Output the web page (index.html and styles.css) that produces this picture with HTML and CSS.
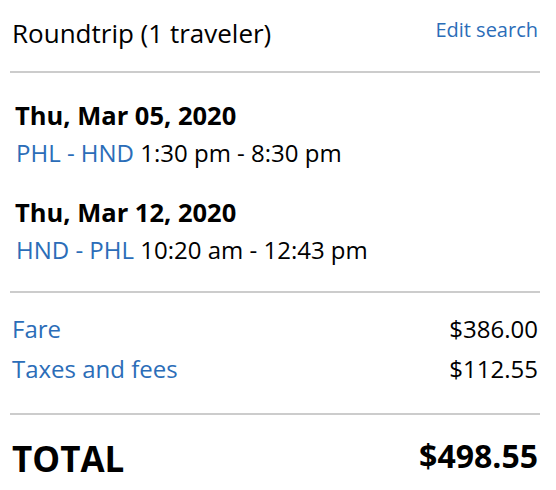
FILE: index.html
```html
<!DOCTYPE html>
<html lang="en">
<head>
<meta charset="utf-8">
<title>Trip summary</title>
<link rel="stylesheet" href="styles.css">
</head>
<body>
<div class="card">
  <div class="head">
    <span class="title">Roundtrip (1 traveler)</span>
    <a class="edit" href="#">Edit search</a>
  </div>
  <div class="rule rule-top"></div>
  <div class="legs">
    <div class="leg">
      <div class="date">Thu, Mar 05, 2020</div>
      <div class="route"><span class="codes">PHL - HND</span> 1:30 pm - 8:30 pm</div>
    </div>
    <div class="leg">
      <div class="date">Thu, Mar 12, 2020</div>
      <div class="route"><span class="codes">HND - PHL</span> 10:20 am - 12:43 pm</div>
    </div>
  </div>
  <div class="rule rule-mid"></div>
  <div class="prices">
    <div class="row"><span class="label">Fare</span><span class="amount">$386.00</span></div>
    <div class="row"><span class="label">Taxes and fees</span><span class="amount">$112.55</span></div>
  </div>
  <div class="rule rule-bot"></div>
  <div class="total">
    <span class="total-label">TOTAL</span><span class="total-amount">$498.55</span>
  </div>
</div>
</body>
</html>
```
FILE: styles.css
```css
html, body {
  margin: 0;
  padding: 0;
  background: #fff;
}
body {
  font-family: "Open Sans", "DejaVu Sans", sans-serif;
  color: #000;
}
.card {
  width: 556px;
}
.head {
  display: flex;
  justify-content: space-between;
  align-items: flex-start;
  padding: 18px 18px 0 12px;
}
.title {
  font-size: 26px;
  line-height: 30px;
}
.edit {
  font-size: 20px;
  line-height: 22px;
  margin-top: 1px;
  color: #2b6db8;
  text-decoration: none;
}
.rule {
  height: 2px;
  background: #cccccc;
  margin: 0 16px 0 10px;
}
.rule-top { margin-top: 23px; }
.legs {
  padding: 27px 18px 0 15px;
}
.leg + .leg { margin-top: 22px; }
.date {
  font-size: 25.5px;
  font-weight: 700;
  line-height: 30px;
}
.route {
  font-size: 24px;
  line-height: 45px;
  padding-left: 1px;
}
.codes { color: #2b6db8; }
.rule-mid { margin-top: 19px; }
.prices {
  padding: 16px 18px 0 12px;
}
.row {
  display: flex;
  justify-content: space-between;
  font-size: 24px;
  line-height: 40px;
}
.label { color: #2b6db8; }
.rule-bot { margin-top: 24px; }
.total {
  display: flex;
  justify-content: space-between;
  align-items: flex-start;
  padding: 19px 18px 0 12px;
}
.total-label {
  font-size: 35px;
  font-weight: 700;
  line-height: 50px;
}
.total-amount {
  font-size: 32px;
  font-weight: 700;
  line-height: 44px;
}
```
